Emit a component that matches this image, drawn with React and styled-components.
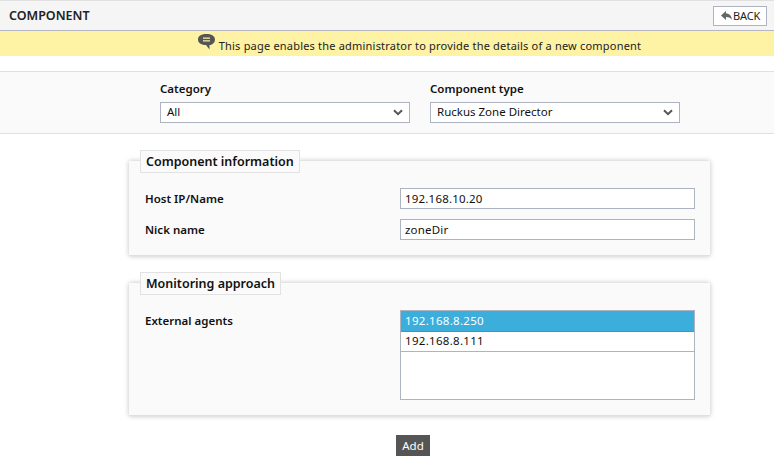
import React from "react";
import styled, { createGlobalStyle } from "styled-components";

const GlobalStyle = createGlobalStyle`
  html, body {
    margin: 0;
    padding: 0;
    background: #fff;
  }
  body {
    font-family: "Noto Sans", "DejaVu Sans", sans-serif;
    font-size: 11.5px;
    color: #111;
  }
`;

function ChevronIcon() {
  return (
    <svg width="10" height="7" viewBox="0 0 10 7">
      <path d="M1 1.2 5 5.2 9 1.2" fill="none" stroke="#555" strokeWidth="2" />
    </svg>
  );
}

function BackIcon() {
  return (
    <svg width="11" height="10" viewBox="0 0 11 10">
      <path d="M0 4.5 5 0v2.6c3.6 0 5.6 2.4 6 6.4C9.800 6.800 8 6 5 6v3z" fill="#666" />
    </svg>
  );
}

function BubbleIcon() {
  return (
    <svg width="17" height="16" viewBox="0 0 17 16">
      <path
        d="M8.500 0C13 0 17 1.800 17 5.500S13.500 11 11.500 11v4.500L8 11C4 11 0 9.500 0 5.500S4 0 8.500 0z"
        fill="#555"
      />
      <path d="M5 4.200h7M5 6.800h7" stroke="#fef2a4" strokeWidth="1.200" />
    </svg>
  );
}

function SelectBox({ value }) {
  return (
    <Select>
      <span>{value}</span>
      <ChevronIcon />
    </Select>
  );
}

function App() {
  return (
    <Page>
      <GlobalStyle />
      <Header>
        <Title>COMPONENT</Title>
        <BackButton type="button">
          <BackIcon />
          BACK
        </BackButton>
      </Header>
      <Notice>
        <BubbleIcon />
        <NoticeText>
          This page enables the administrator to provide the details of a new
          component
        </NoticeText>
      </Notice>
      <Filters>
        <Filter>
          <FilterLabel>Category</FilterLabel>
          <SelectBox value="All" />
        </Filter>
        <Filter>
          <FilterLabel>Component type</FilterLabel>
          <SelectBox value="Ruckus Zone Director" />
        </Filter>
      </Filters>
      <Content>
        <Fieldset>
          <Legend>Component information</Legend>
          <Row>
            <RowLabel>Host IP/Name</RowLabel>
            <TextInput>192.168.10.20</TextInput>
          </Row>
          <Row>
            <RowLabel>Nick name</RowLabel>
            <TextInput>zoneDir</TextInput>
          </Row>
        </Fieldset>
        <Fieldset $tall>
          <Legend>Monitoring approach</Legend>
          <Row $top>
            <RowLabel $top>External agents</RowLabel>
            <ListBox>
              <ListItem $selected>192.168.8.250</ListItem>
              <ListItem>192.168.8.111</ListItem>
            </ListBox>
          </Row>
        </Fieldset>
        <AddButton type="button">Add</AddButton>
      </Content>
    </Page>
  );
}

export default App;

const Page = styled.div`
  width: 774px;
  height: 466px;
  overflow: hidden;
`;

const Header = styled.header`
  display: flex;
  align-items: center;
  justify-content: space-between;
  box-sizing: border-box;
  height: 31px;
  padding: 0 7px 0 9px;
  background: #f5f5f5;
  border-top: 1px solid #e0e0e0;
  border-bottom: 1px solid #b4b7c2;
`;

const Title = styled.h1`
  margin: 0;
  font-size: 12.500px;
  font-weight: 600;
  color: #222;
`;

const BackButton = styled.button`
  display: flex;
  align-items: center;
  gap: 1px;
  box-sizing: border-box;
  width: 54px;
  height: 20px;
  padding: 0 0 0 7px;
  background: #fff;
  border: 1px solid #aeb3c2;
  font: inherit;
  font-size: 11px;
  letter-spacing: -0.1px;
  color: #222;
`;

const Notice = styled.div`
  display: flex;
  align-items: flex-start;
  justify-content: center;
  gap: 4px;
  height: 25px;
  padding-left: 65px;
  box-sizing: border-box;
  padding-top: 3px;
  background: #fef2a4;
`;

const NoticeText = styled.span`
  margin-top: 4px;
  font-size: 11px;
  line-height: 15px;
  letter-spacing: 0.2px;
  color: #222;
`;

const Filters = styled.section`
  display: flex;
  gap: 20px;
  box-sizing: border-box;
  height: 63px;
  margin-top: 15px;
  padding: 9px 0 0 160px;
  background: #fafafa;
  border-top: 1px solid #e0e0e0;
  border-bottom: 1px solid #e0e0e0;
`;

const Filter = styled.div`
  display: flex;
  flex-direction: column;
  gap: 5px;
  width: 250px;
`;

const FilterLabel = styled.label`
  font-weight: 600;
  line-height: 16px;
`;

const Select = styled.div`
  display: flex;
  align-items: center;
  justify-content: space-between;
  box-sizing: border-box;
  height: 21px;
  padding: 0 6px 2px 6px;
  background: #fff;
  border: 1px solid #aeb3c2;

  & > svg {
    margin-top: 2px;
  }
`;

const Content = styled.main`
  display: flex;
  flex-direction: column;
  padding: 27px 0 0 129px;
`;

const Fieldset = styled.section`
  position: relative;
  box-sizing: border-box;
  width: 581px;
  height: ${(props) => (props.$tall ? "133px" : "95px")};
  margin-bottom: 27px;
  padding: 27px 15px 0 16px;
  background: #fafafa;
  border-bottom: 1px solid #e0e0e0;
  box-shadow: 0 0 5px rgba(0, 0, 0, 0.25);
`;

const Legend = styled.h2`
  position: absolute;
  top: -11px;
  left: 11px;
  margin: 0;
  padding: 0 5px;
  height: 21px;
  line-height: 21px;
  background: #fafafa;
  border: 1px solid #e2e2e2;
  font-size: 12.500px;
  font-weight: 600;
  color: #111;
`;

const Row = styled.div`
  display: flex;
  align-items: ${(props) => (props.$top ? "flex-start" : "center")};
  margin-bottom: 10px;
`;

const RowLabel = styled.label`
  width: 255px;
  font-weight: 600;
  padding-top: ${(props) => (props.$top ? "3px" : "0")};
  line-height: 16px;
`;

const TextInput = styled.div`
  box-sizing: border-box;
  width: 295px;
  height: 21px;
  padding-left: 4px;
  line-height: 19px;
  letter-spacing: 0.2px;
  background: #fff;
  border: 1px solid #aeb3c2;
`;

const ListBox = styled.div`
  box-sizing: border-box;
  width: 295px;
  height: 90px;
  background: #fff;
  border: 1px solid #aeb3c2;
`;

const ListItem = styled.div`
  box-sizing: border-box;
  height: ${(props) => (props.$selected ? "21px" : "20px")};
  padding-left: 4px;
  line-height: ${(props) => (props.$selected ? "19px" : "17px")};
  letter-spacing: 0.3px;
  background: ${(props) => (props.$selected ? "#3caedb" : "#fff")};
  color: ${(props) => (props.$selected ? "#fff" : "#111")};
  border-bottom: 1px solid ${(props) => (props.$selected ? "#2f9bcb" : "#aeb3c2")};
`;

const AddButton = styled.button`
  align-self: flex-start;
  width: 34px;
  height: 21px;
  margin: -8px 0 0 267px;
  padding: 0;
  background: #555;
  border: none;
  font: inherit;
  color: #fff;
`;
